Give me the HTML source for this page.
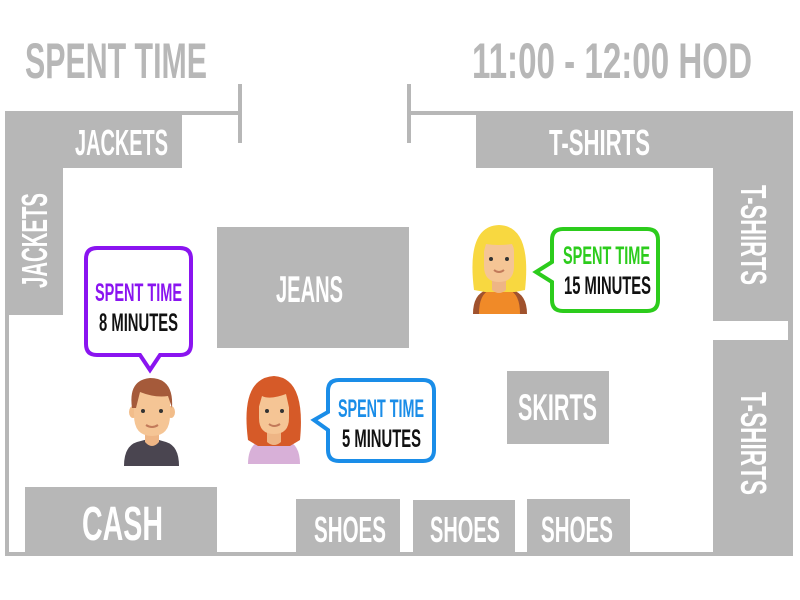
<!DOCTYPE html>
<html><head><meta charset="utf-8"><style>html,body{margin:0;padding:0;background:#fff}svg{display:block}</style></head><body>
<svg width="800" height="600" viewBox="0 0 800 600" xmlns="http://www.w3.org/2000/svg" font-family="'Liberation Sans Narrow','Liberation Sans',sans-serif" font-weight="bold">
<g fill="#b7b7b7">
<rect x="5" y="111" width="236" height="4"/>
<rect x="409" y="111" width="384" height="4"/>
<rect x="238" y="84" width="4" height="59"/>
<rect x="407" y="84" width="4" height="59"/>
<rect x="5" y="111" width="4" height="445"/>
<rect x="5" y="552" width="788" height="4"/>
<rect x="5" y="111" width="177" height="57"/>
<rect x="5" y="111" width="58" height="204"/>
<rect x="476" y="111" width="317" height="57"/>
<rect x="713" y="111" width="80" height="210"/>
<rect x="788" y="111" width="5" height="230"/>
<rect x="713" y="340" width="80" height="216"/>
<rect x="217" y="227" width="192" height="121"/>
<rect x="507" y="371" width="102" height="73"/>
<rect x="25" y="487" width="192" height="67"/>
<rect x="296" y="499" width="104" height="55"/>
<rect x="413" y="500" width="102" height="54"/>
<rect x="527" y="499" width="103" height="55"/>
<text x="25" y="78" font-size="50" textLength="182" lengthAdjust="spacingAndGlyphs">SPENT TIME</text>
<text x="472" y="78" font-size="50" textLength="280" lengthAdjust="spacingAndGlyphs">11:00 - 12:00 HOD</text>
</g>
<g fill="#fff">
<text x="75" y="155" font-size="36" textLength="93" lengthAdjust="spacingAndGlyphs">JACKETS</text>
<text x="549" y="155" font-size="36" textLength="101" lengthAdjust="spacingAndGlyphs">T-SHIRTS</text>
<text transform="translate(47,288) rotate(-90)" font-size="36" textLength="95" lengthAdjust="spacingAndGlyphs">JACKETS</text>
<text transform="translate(741,185) rotate(90)" font-size="36" textLength="100" lengthAdjust="spacingAndGlyphs">T-SHIRTS</text>
<text transform="translate(741,392) rotate(90)" font-size="36" textLength="103" lengthAdjust="spacingAndGlyphs">T-SHIRTS</text>
<text x="276" y="302" font-size="37" textLength="67" lengthAdjust="spacingAndGlyphs">JEANS</text>
<text x="518" y="420" font-size="37" textLength="79" lengthAdjust="spacingAndGlyphs">SKIRTS</text>
<text x="82" y="540" font-size="48" textLength="81" lengthAdjust="spacingAndGlyphs">CASH</text>
<text x="314" y="542" font-size="36" textLength="72" lengthAdjust="spacingAndGlyphs">SHOES</text>
<text x="430" y="542" font-size="36" textLength="70" lengthAdjust="spacingAndGlyphs">SHOES</text>
<text x="541" y="542" font-size="36" textLength="72" lengthAdjust="spacingAndGlyphs">SHOES</text>
</g>
<!-- bubbles -->
<path d="M97 248 H180 Q191 248 191 259 V344 Q191 355 180 355 H160 L150 370 L140 355 H97 Q86 355 86 344 V259 Q86 248 97 248 Z" fill="#fff" stroke="#8a14f0" stroke-width="4"/>
<text x="95" y="301" font-size="25" fill="#8a14f0" textLength="87" lengthAdjust="spacingAndGlyphs">SPENT TIME</text>
<text x="99" y="331" font-size="25" fill="#111" textLength="79" lengthAdjust="spacingAndGlyphs">8 MINUTES</text>
<path d="M339 380 H423 Q434 380 434 391 V450 Q434 461 423 461 H339 Q328 461 328 450 V430 L314 420 L328 412 V391 Q328 380 339 380 Z" fill="#fff" stroke="#1a8de8" stroke-width="4"/>
<text x="338" y="417" font-size="25" fill="#1a8de8" textLength="86" lengthAdjust="spacingAndGlyphs">SPENT TIME</text>
<text x="342" y="447" font-size="25" fill="#111" textLength="79" lengthAdjust="spacingAndGlyphs">5 MINUTES</text>
<path d="M563 229 H647 Q658 229 658 240 V300 Q658 311 647 311 H563 Q552 311 552 300 V282 L536 272 L552 262 V240 Q552 229 563 229 Z" fill="#fff" stroke="#2ccc1c" stroke-width="4"/>
<text x="563" y="264" font-size="25" fill="#2ccc1c" textLength="87" lengthAdjust="spacingAndGlyphs">SPENT TIME</text>
<text x="564" y="294" font-size="25" fill="#111" textLength="87" lengthAdjust="spacingAndGlyphs">15 MINUTES</text>
<!-- man -->
<g>
<path d="M124 466 Q124 446 137 442 L152 438 L166 442 Q179 446 179 466 Z" fill="#4a4550"/>
<path d="M145 430 h14 v12 q-7 8 -14 0 Z" fill="#eeb585"/>
<ellipse cx="133" cy="412" rx="4" ry="6" fill="#f2bd8a"/>
<ellipse cx="171" cy="412" rx="4" ry="6" fill="#f2bd8a"/>
<path d="M134 400 Q134 380 152 380 Q170 380 170 400 V415 Q170 436 152 436 Q134 436 134 415 Z" fill="#f5c595"/>
<path d="M132 408 Q128 380 150 378 Q174 378 172 408 L168 396 Q155 398 140 392 L136 408 Z" fill="#a55a3a"/>
<circle cx="143" cy="411" r="2" fill="#333"/><circle cx="161" cy="411" r="2" fill="#333"/>
<path d="M146 425 q6 4 12 0" stroke="#c27a5a" stroke-width="2" fill="none"/>
</g>
<!-- red-hair woman -->
<g>
<path d="M248 464 Q248 444 262 440 L274 436 L286 440 Q300 444 300 464 Z" fill="#d8b0d8"/>
<path d="M248 440 Q240 378 274 376 Q306 378 300 440 L290 446 L258 446 Z" fill="#d65a28"/>
<path d="M267 430 h14 v12 q-7 6 -14 0 Z" fill="#eeb585"/>
<path d="M259 402 Q259 388 274 388 Q289 388 289 402 V418 Q289 434 274 434 Q259 434 259 418 Z" fill="#f5c595"/>
<path d="M258 410 Q256 384 278 384 Q296 390 290 412 L286 394 Q270 400 262 396 Z" fill="#d65a28"/>
<circle cx="267" cy="411" r="2" fill="#333"/><circle cx="282" cy="411" r="2" fill="#333"/>
<path d="M269 424 q5 4 11 0" stroke="#c27a5a" stroke-width="2" fill="none"/>
</g>
<!-- blonde woman -->
<g>
<path d="M473 314 Q473 294 487 290 L499 286 L512 290 Q527 294 527 314 Z" fill="#a0522d"/>
<path d="M479 314 Q479 294 490 290 L499 286 L509 290 Q520 294 520 314 Z" fill="#f08a28"/>
<path d="M474 290 Q466 226 499 225 Q532 226 525 290 L515 292 L485 292 Z" fill="#f8d840"/>
<path d="M492 280 h14 v10 q-7 6 -14 0 Z" fill="#eeb585"/>
<path d="M484 252 Q484 238 499 238 Q514 238 514 252 V266 Q514 282 499 282 Q484 282 484 266 Z" fill="#f5c595"/>
<path d="M482 258 Q482 232 500 232 Q518 234 518 258 L512 244 Q498 246 486 244 Z" fill="#f8d840"/>
<circle cx="491" cy="259" r="2" fill="#333"/><circle cx="507" cy="259" r="2" fill="#333"/>
<path d="M494 270 q5 4 10 0" stroke="#c27a5a" stroke-width="2" fill="none"/>
</g>
</svg>
</body></html>
